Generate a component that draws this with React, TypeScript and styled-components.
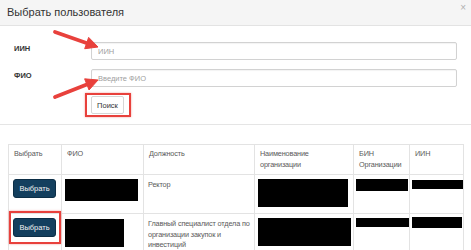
import React from "react";
import styled, { createGlobalStyle } from "styled-components";

const GlobalStyle = createGlobalStyle`
  html, body {
    margin: 0;
    padding: 0;
    background: #ffffff;
  }
  body {
    font-family: "Liberation Sans", Arial, sans-serif;
    color: #333333;
  }
`;

const Modal = styled.div`
  position: relative;
  width: 471px;
  height: 250px;
  overflow: hidden;
  background: #ffffff;
`;

const Header = styled.div`
  height: 26px;
  box-sizing: border-box;
  background: #f5f5f5;
  border-bottom: 1px solid #e3e3e3;
  display: flex;
  align-items: center;
  justify-content: space-between;
  padding: 0 5px 1px 7px;
`;

const Title = styled.h4`
  margin: 0;
  font-size: 11px;
  font-weight: normal;
  color: #333333;
`;

const Close = styled.span`
  font-size: 10px;
  line-height: 1;
  color: #b0b0b0;
  align-self: flex-start;
  margin-top: 3px;
`;

const Form = styled.div`
  display: grid;
  grid-template-columns: 77px 366px;
  row-gap: 9px;
  padding: 16px 0 7px 14px;
  border-bottom: 1px solid #e5e5e5;
`;

const Label = styled.label`
  font-size: 7.5px;
  font-weight: bold;
  color: #333333;
  padding-top: 2px;
`;

const Input = styled.input`
  height: 18px;
  box-sizing: border-box;
  border: 1px solid #d2d2d2;
  border-radius: 2px;
  box-shadow: inset 0 1px 1px rgba(0, 0, 0, 0.05);
  padding: 0 6px;
  font-family: inherit;
  font-size: 7.5px;
  color: #555555;
  outline: none;
  &::placeholder {
    color: #a0a0a0;
  }
`;

const Highlight = styled.div<{ $pad: string }>`
  display: inline-flex;
  border: 2px solid #e8413c;
  box-shadow: 0 0 2px rgba(232, 65, 60, 0.5);
  padding: ${(p) => p.$pad};
`;

const ButtonCell = styled.div`
  grid-column: 2;
  margin-top: -3px;
  margin-left: -6px;
`;

const DefaultButton = styled.button`
  width: 33px;
  height: 18px;
  padding: 0;
  border: 1px solid #d6d6d6;
  border-radius: 2px;
  background: #ffffff;
  font-family: inherit;
  font-size: 7.5px;
  color: #333333;
`;

const PrimaryButton = styled.button`
  width: 43px;
  height: 19px;
  padding: 0;
  border: 1px solid #0c2e46;
  border-radius: 3px;
  background: #133f5e;
  font-family: inherit;
  font-size: 7.5px;
  color: #f2f2f2;
`;

const TableWrap = styled.div`
  padding: 19px 8px 0 8px;
`;

const Table = styled.table`
  border-collapse: collapse;
  table-layout: fixed;
  width: 455px;
  font-size: 7.3px;
  line-height: 10.5px;
  letter-spacing: -0.15px;
  color: #5a5a5a;
`;

const Col = styled.col<{ $w: number }>`
  width: ${(p) => p.$w}px;
`;

const Row = styled.tr<{ $h: number }>`
  height: ${(p) => p.$h}px;
`;

const Th = styled.th`
  border: 1px solid #e3e3e3;
  text-align: left;
  vertical-align: top;
  font-weight: normal;
  padding: 4px 5px;
`;

const Td = styled.td<{ $pad?: string }>`
  border: 1px solid #e3e3e3;
  vertical-align: top;
  padding: ${(p) => p.$pad ?? "4px 4px"};
`;

const Redacted = styled.div<{ $w: number; $h: number }>`
  width: ${(p) => p.$w}px;
  height: ${(p) => p.$h}px;
  background: #000000;
`;

const Overlay = styled.svg`
  position: absolute;
  left: 0;
  top: 0;
  pointer-events: none;
`;

function Arrow({ x1, y1, x2, y2 }: { x1: number; y1: number; x2: number; y2: number }) {
  const dx = x2 - x1;
  const dy = y2 - y1;
  const len = Math.hypot(dx, dy);
  const ux = dx / len;
  const uy = dy / len;
  const nx = -uy;
  const ny = ux;
  const headLen = 12;
  const headW = 6;
  const bx = x2 - ux * headLen;
  const by = y2 - uy * headLen;
  const pts = [
    [x2, y2],
    [bx + nx * headW, by + ny * headW],
    [bx - nx * headW, by - ny * headW],
  ]
    .map((p) => p.join(","))
    .join(" ");
  return (
    <g fill="#e8413c" stroke="#e8413c">
      <line x1={x1} y1={y1} x2={bx + ux * 2} y2={by + uy * 2} strokeWidth={3.8} strokeLinecap="round" />
      <polygon points={pts} strokeWidth={1} strokeLinejoin="round" />
    </g>
  );
}

export default function App() {
  return (
    <Modal>
      <GlobalStyle />
      <Header>
        <Title>Выбрать пользователя</Title>
        <Close>×</Close>
      </Header>
      <Form>
        <Label>ИИН</Label>
        <Input placeholder="ИИН" />
        <Label>ФИО</Label>
        <Input placeholder="Введите ФИО" />
        <ButtonCell>
          <Highlight $pad="1px 5px 1px 4px">
            <DefaultButton>Поиск</DefaultButton>
          </Highlight>
        </ButtonCell>
      </Form>
      <TableWrap>
        <Table>
          <colgroup>
            <Col $w={53} />
            <Col $w={82} />
            <Col $w={111} />
            <Col $w={99} />
            <Col $w={56} />
            <Col $w={54} />
          </colgroup>
          <thead>
            <Row $h={28}>
              <Th>Выбрать</Th>
              <Th>ФИО</Th>
              <Th>Должность</Th>
              <Th>Наименование организации</Th>
              <Th>БИН Организации</Th>
              <Th>ИИН</Th>
            </Row>
          </thead>
          <tbody>
            <Row $h={39}>
              <Td $pad="4px 4px">
                <PrimaryButton>Выбрать</PrimaryButton>
              </Td>
              <Td $pad="4px 3px">
                <Redacted $w={73} $h={22} />
              </Td>
              <Td $pad="5px 4px">Ректор</Td>
              <Td $pad="4px 3px">
                <Redacted $w={90} $h={28} />
              </Td>
              <Td $pad="4px 2px">
                <Redacted $w={52} $h={12} />
              </Td>
              <Td $pad="5px 2px">
                <Redacted $w={51} $h={9} />
              </Td>
            </Row>
            <Row $h={40}>
              <Td $pad="0 4px 0 0">
                <Highlight $pad="5px 3px 5px 2px" style={{ marginTop: -3 }}>
                  <PrimaryButton>Выбрать</PrimaryButton>
                </Highlight>
              </Td>
              <Td $pad="5px 3px">
                <Redacted $w={59} $h={28} />
              </Td>
              <Td $pad="5px 1px 5px 4px">Главный специалист отдела по организации закупок и инвестиций</Td>
              <Td $pad="4px 3px">
                <Redacted $w={93} $h={28} />
              </Td>
              <Td $pad="4px 2px">
                <Redacted $w={53} $h={9} />
              </Td>
              <Td $pad="3px 2px">
                <Redacted $w={50} $h={11} />
              </Td>
            </Row>
          </tbody>
        </Table>
      </TableWrap>
      <Overlay width={471} height={250} viewBox="0 0 471 250">
        <Arrow x1={55} y1={32} x2={98} y2={47} />
        <Arrow x1={55} y1={97} x2={98} y2={80} />
      </Overlay>
    </Modal>
  );
}
